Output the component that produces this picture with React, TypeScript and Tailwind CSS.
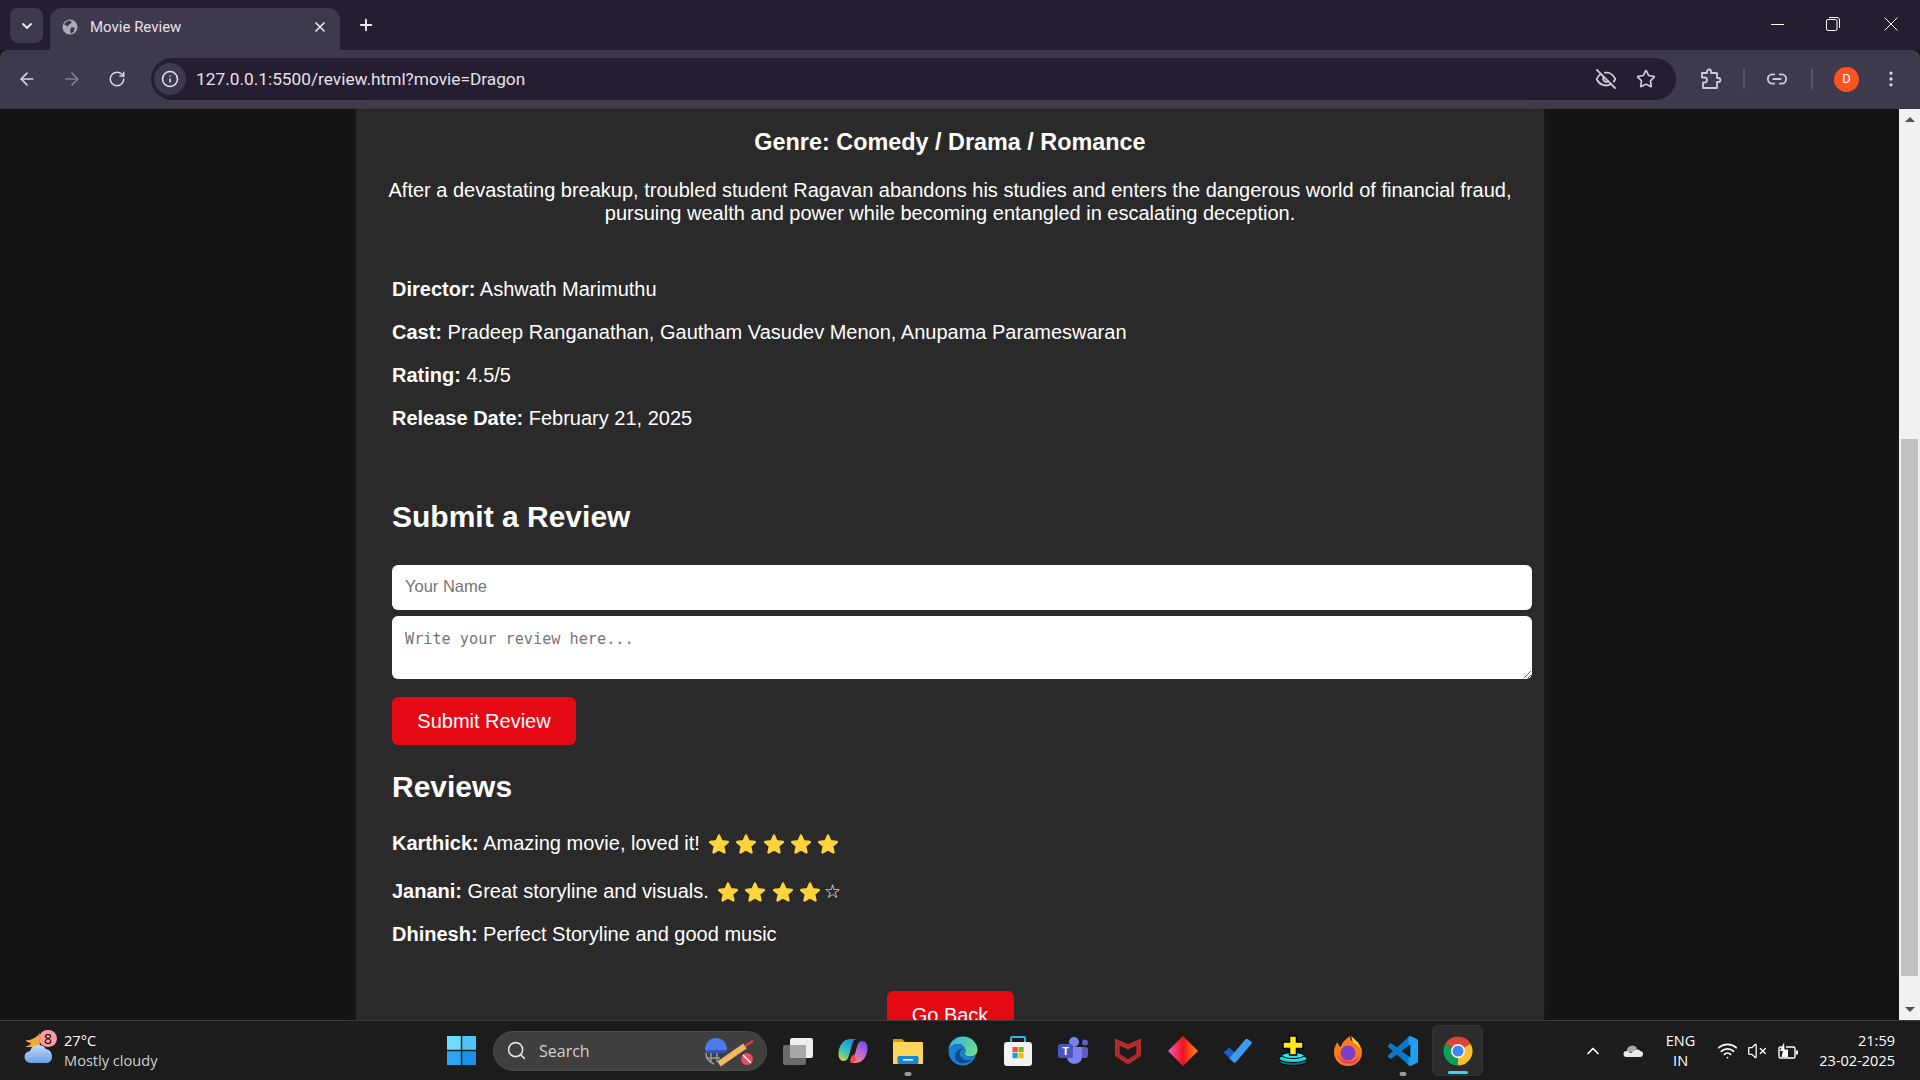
import React from 'react';
import { ArrowLeft, ArrowRight, RotateCw, Info, EyeOff, Star, Link2, EllipsisVertical, ChevronDown, X, Plus, Search, ChevronUp, Wifi, VolumeX } from 'lucide-react';

const YellowStar = () => (
    <svg viewBox="0 0 24 24" className="w-5 h-5 shrink-0">
        <path fill="#FFD43B" stroke="#FFD43B" strokeWidth="3" strokeLinejoin="round" d="M12 2l3 6.800 7.500.8-5.600 5 1.600 7.400L12 18.200 5.500 22l1.600-7.400-5.600-5 7.500-.8z" />
    </svg>
);

const Globe = () => (
    <svg viewBox="0 0 16 16" className="w-[16px] h-[16px] shrink-0">
        <circle cx="8" cy="8" r="7.500" fill="#A9ADB4" />
        <path fill="#3F394D" d="M6 1.500l3.500.5-.5 2.500-2 1-1 2-3-1.500-1-1zM9.500 8l3.500 1-1.500 4-2.500 1.500-1-3z" />
    </svg>
);

const AppIcon = ({ children, active }: { children: React.ReactNode; active?: boolean }) => (
    <div className={active ? "w-[51px] h-[51px] rounded-md bg-[#2c2c2c] border border-[#333] flex items-center justify-center" : "w-[51px] h-[51px] flex items-center justify-center"}>
        {children}
    </div>
);

const Dot = () => <div className="absolute bottom-0 left-1/2 -translate-x-1/2 w-[7px] h-[4px] rounded-full bg-[#9a9a9a]" />;

const App = () => {
    return (
        <div className="h-screen w-full flex flex-col overflow-hidden bg-[#141414] text-white font-['Liberation_Sans',Arial,sans-serif]">
            {/* browser chrome */}
            <div className="h-[50px] shrink-0 bg-[#241e30] flex items-end pl-[10px]">
                <div className="w-[33px] h-[35px] mb-[7px] rounded-lg bg-[#3f394d] flex items-center justify-center">
                    <ChevronDown size={16} strokeWidth={3} className="text-[#e6e3ec]" />
                </div>
                <div className="ml-[7px] w-[290px] h-[42px] rounded-t-xl bg-[#3f394d] flex items-center pl-[12px] pr-[12px] pb-[4px] text-[15px] text-[#e4e1ea] font-['Roboto',sans-serif]">
                    <Globe />
                    <span className="ml-[12px] flex-1">Movie Review</span>
                    <X size={16} strokeWidth={2.5} className="text-[#eeeaf3]" />
                </div>
                <div className="ml-[17px] mb-[10px] h-[30px] flex items-center">
                    <Plus size={18} strokeWidth={2.5} className="text-[#eeeaf3]" />
                </div>
                <div className="ml-auto self-start mt-[17px] pr-[22px] flex items-center">
                    <div className="w-[13px] h-px bg-white" />
                    <svg viewBox="0 0 14 14" className="ml-[42px] w-[14px] h-[14px]" fill="none" stroke="#fff">
                        <rect x="0.500" y="2.500" width="10.500" height="11" rx="1.500" />
                        <path d="M3 .5h8a2.500 2.500 0 0 1 2.500 2.500v8" />
                    </svg>
                    <svg viewBox="0 0 14 14" className="ml-[44px] w-[14px] h-[14px]" fill="none" stroke="#fff">
                        <path d="M.5.5l13 13M13.500.5l-13 13" />
                    </svg>
                </div>
            </div>
            <div className="h-[59px] shrink-0 bg-[#3f394d] rounded-t-lg flex items-center pl-[17px] pr-[14px] border-b border-[#37323f]">
                <ArrowLeft size={20} className="text-[#d8d4de]" />
                <ArrowRight size={20} className="ml-[25px] text-[#837e8d]" />
                <RotateCw size={18} className="ml-[26px] text-[#d8d4de]" />
                <div className="ml-[25px] w-[1525px] h-[42px] rounded-full bg-[#241e30] flex items-center pl-[3px] pr-[20px]">
                    <div className="w-[32px] h-[32px] rounded-full bg-[#3f394d] flex items-center justify-center">
                        <Info size={18} className="text-[#e6e3ec]" />
                    </div>
                    <span className="ml-[10px] mt-[1px] flex-1 text-[17.3px] text-[#e4e1ea] font-['Roboto',sans-serif]">127.0.0.1:5500/review.html?movie=Dragon</span>
                    <EyeOff size={22} className="text-[#cfcbd6]" />
                    <Star size={20} className="ml-[19px] text-[#cfcbd6]" />
                </div>
                <svg viewBox="0 0 22 22" className="ml-[24px] w-[22px] h-[22px]" fill="none" stroke="#cfcbd6" strokeWidth="1.800" strokeLinejoin="round">
                    <path d="M2 5h5V3.500a2 2 0 0 1 4 0V5h6v5h1.500a2 2 0 0 1 0 4H17v6H3v-5.500h1.500a2.500 2.500 0 0 0 0-5H2z" />
                </svg>
                <div className="ml-[21px] w-[2px] h-[20px] bg-[#5a5466]" />
                <Link2 size={22} className="ml-[21px] text-[#cfcbd6]" />
                <div className="ml-[23px] w-[2px] h-[20px] bg-[#5a5466]" />
                <div className="ml-[21px] w-[25px] h-[25px] rounded-full bg-[#fb5420] flex items-center justify-center text-[13px] font-['Roboto',sans-serif]">D</div>
                <EllipsisVertical size={20} className="ml-[22px] text-[#d8d4de]" />
            </div>

            {/* page */}
            <div className="flex-1 min-h-0 flex">
                <div className="flex-1 flex justify-center">
                    <div className="w-[1188px] ml-[1px] h-full overflow-hidden bg-[#2a2a2a] shadow-[0_0_15px_rgba(255,255,255,0.05)]">
                        <h3 className="mt-[19px] text-[23.4px] leading-[28px] font-bold text-center">Genre: Comedy / Drama / Romance</h3>
                        <p className="mt-[23px] text-[20px] leading-[23px] text-center">
                            After a devastating breakup, troubled student Ragavan abandons his studies and enters the dangerous world of financial fraud, pursuing wealth and power while becoming entangled in escalating deception.
                        </p>
                        <div className="ml-[36px] mr-[12px]">
                            <div className="mt-[53px] flex flex-col gap-[20px] text-[20px] leading-[23px]">
                                <p><b>Director:</b> Ashwath Marimuthu</p>
                                <p><b>Cast:</b> Pradeep Ranganathan, Gautham Vasudev Menon, Anupama Parameswaran</p>
                                <p><b>Rating:</b> 4.5/5</p>
                                <p><b>Release Date:</b> February 21, 2025</p>
                            </div>
                            <h2 className="mt-[69px] text-[30px] leading-[35px] font-bold">Submit a Review</h2>
                            <input placeholder="Your Name" className="mt-[31px] block w-full h-[45px] rounded-[6px] bg-white px-[13px] pb-[2px] text-[16.5px] text-black placeholder:text-[#757575] outline-none" />
                            <textarea placeholder="Write your review here..." className="mt-[6px] block w-full h-[63px] rounded-[6px] bg-white px-[13px] pt-[14px] text-[15.2px] leading-[18px] text-black placeholder:text-[#757575] outline-none font-['DejaVu_Sans_Mono',monospace]" />
                            <button className="mt-[18px] block w-[184px] h-[48px] rounded-[6px] bg-[#e50914] text-[20px] pb-[1px]">Submit Review</button>
                            <h2 className="mt-[24px] text-[30px] leading-[35px] font-bold">Reviews</h2>
                            <p className="mt-[28px] flex items-center h-[23px] text-[20px] leading-[23px] whitespace-pre">
                                <b>Karthick:</b> Amazing movie, loved it!
                                <span className="ml-[9px] flex gap-[7.4px]"><YellowStar /><YellowStar /><YellowStar /><YellowStar /><YellowStar /></span>
                            </p>
                            <p className="mt-[25px] flex items-center h-[23px] text-[20px] leading-[23px] whitespace-pre">
                                <b>Janani:</b> Great storyline and visuals.
                                <span className="ml-[9px] flex items-center gap-[7.4px]"><YellowStar /><YellowStar /><YellowStar /><YellowStar /></span>
                                <span className="ml-[4px] text-[19px] font-bold text-white font-['DejaVu_Sans',sans-serif]">☆</span>
                            </p>
                            <p className="mt-[20px] text-[20px] leading-[23px]"><b>Dhinesh:</b> Perfect Storyline and good music</p>
                            <div className="mt-[45px] flex justify-center pr-[24px]">
                                <button className="w-[127px] h-[48px] shrink-0 rounded-[6px] bg-[#e50914] text-[20px]">Go Back</button>
                            </div>
                        </div>
                    </div>
                </div>
                {/* scrollbar */}
                <div className="w-[21px] shrink-0 bg-[#f1f1f1] flex flex-col items-center">
                    <div className="h-[21px] flex items-center"><div className="w-0 h-0 border-x-[5px] border-x-transparent border-b-[5px] border-b-[#505050]" /></div>
                    <div className="mt-[309px] w-[17px] h-[537px] bg-[#c1c1c1]" />
                    <div className="mt-auto h-[21px] flex items-center"><div className="w-0 h-0 border-x-[5px] border-x-transparent border-t-[5px] border-t-[#505050]" /></div>
                </div>
            </div>

            {/* taskbar */}
            <div className="h-[60px] shrink-0 bg-[#1c1c1c] border-t border-[#3a3a3a] flex items-center font-['Open_Sans',sans-serif] text-[14px]">
                <div className="w-[445px] pl-[16px] flex items-center">
                    <div className="relative w-[40px] h-[40px] -mt-[1px]">
                        <svg viewBox="0 0 40 40" className="w-[40px] h-[40px]">
                            <defs>
                                <linearGradient id="cloud" x1="0" x2="0" y1="0" y2="1">
                                    <stop offset="0" stopColor="#C3DAF8" />
                                    <stop offset="1" stopColor="#6C9FE6" />
                                </linearGradient>
                            </defs>
                            <path fill="#F2A93B" d="M24 3c-1 5 0 9 0 14H9c3-1 6-3 6-4-2 0-4-1-6-3 5 1 11-2 15-7z" />
                            <path fill="url(#cloud)" d="M15 33a6 6 0 0 1-1-12 9 9 0 0 1 16-2 7.500 7.500 0 0 1 2 14z" />
                        </svg>
                        <div className="absolute left-[23px] top-0 w-[18px] h-[17px] rounded-full bg-[#ff9aa2] text-black text-[14px] leading-[17px] text-center">8</div>
                    </div>
                    <div className="ml-[8px] -mt-[2px] leading-[20px] text-[14.6px]">
                        <div className="text-white">27°C</div>
                        <div className="text-[#cfcfcf]">Mostly cloudy</div>
                    </div>
                </div>
                <svg viewBox="0 0 20 20" className="w-[29px] h-[29px] ml-[2px]">
                    <rect x="0" y="0" width="9.500" height="9.500" fill="#6FDCFC" />
                    <rect x="10.500" y="0" width="9.500" height="9.500" fill="#4FC4F8" />
                    <rect x="0" y="10.500" width="9.500" height="9.500" fill="#2BA8F5" />
                    <rect x="10.500" y="10.500" width="9.500" height="9.500" fill="#1C8FE8" />
                </svg>
                <div className="ml-[17px] w-[274px] h-[40px] rounded-full bg-[#3f3f3f] border border-[#4a4a4a] flex items-center pl-[12px] pr-[8px]">
                    <Search size={21} strokeWidth={1.8} className="text-[#e0e0e0]" />
                    <span className="ml-[12px] flex-1 text-[16px] text-[#d0d0d0]">Search</span>
                    <svg viewBox="0 0 54 32" className="w-[54px] h-[32px]">
                        <path fill="#4F7BE8" d="M1 14a11 11 0 0 1 22 0l-1 4H3z" />
                        <path fill="#2F55B8" d="M3 15h19v3H3z" />
                        <path fill="none" stroke="#9a9a9a" strokeWidth="1.500" d="M2 18c0 6 3 9 8 11M7 18v10M13 18v9M2 23h14" />
                        <path stroke="#EDB866" strokeWidth="6" d="M15 29l26-18" />
                        <path stroke="#D8404A" strokeWidth="2.500" d="M41 11l8-5" />
                        <circle cx="43" cy="24" r="6" fill="#EE4A62" />
                        <path stroke="#fff" strokeWidth="1.500" d="M39 20l8 8" />
                    </svg>
                </div>
                <div className="ml-[5px] flex items-center gap-[4px]">
                    <AppIcon>
                        <svg viewBox="0 0 30 30" className="w-[30px] h-[30px]">
                            <rect x="0" y="9" width="23" height="20" rx="2" fill="#6b6b6b" />
                            <rect x="7" y="2" width="23" height="20" rx="2" fill="#eeeeee" />
                            <rect x="7" y="9" width="16" height="13" fill="#a8a8a8" />
                        </svg>
                    </AppIcon>
                    <AppIcon>
                        <svg viewBox="0 0 30 26" className="w-[30px] h-[26px]">
                            <defs>
                                <linearGradient id="copL" x1="0.700" x2="0.100" y1="0" y2="1">
                                    <stop offset="0" stopColor="#1F8FE8" />
                                    <stop offset="0.600" stopColor="#38C8B0" />
                                    <stop offset="1" stopColor="#F0D030" />
                                </linearGradient>
                                <linearGradient id="copR" x1="0.800" x2="0.200" y1="0" y2="1">
                                    <stop offset="0" stopColor="#6A50E0" />
                                    <stop offset="0.500" stopColor="#C868D8" />
                                    <stop offset="1" stopColor="#F08860" />
                                </linearGradient>
                            </defs>
                            <path fill="url(#copL)" d="M12 1h7c-2 0-3.500 1-4.500 4l-4 14c-1 3-3 4-5 4-3 0-5-3-5-7C.5 10 4 1 12 1z" />
                            <path fill="url(#copR)" d="M18 25h-7c2 0 3.500-1 4.500-4l4-14c1-3 3-4 5-4 3 0 5 3 5 7 0 6-3.500 15-11.500 15z" />
                            <path fill="#E84850" d="M13 25c-1-2-1-4 0-6l3-3 2 6c-1 2-3 3-5 3z" />
                        </svg>
                    </AppIcon>
                    <div className="relative">
                        <AppIcon>
                            <svg viewBox="0 0 30 26" className="w-[30px] h-[26px]">
                                <path fill="#D89A10" d="M0 2a1 1 0 0 1 1-1h8l3 3h-12z" />
                                <rect x="0" y="4" width="30" height="22" rx="1" fill="#FCD55A" />
                                <rect x="4.500" y="18" width="21" height="8" rx="1.500" fill="#1A86D8" />
                                <rect x="10" y="21" width="10" height="1.500" fill="#fff" />
                            </svg>
                        </AppIcon>
                        <Dot />
                    </div>
                    <AppIcon>
                        <svg viewBox="0 0 30 30" className="w-[30px] h-[30px]">
                            <defs>
                                <linearGradient id="edgeTop" x1="0" x2="1" y1="0.300" y2="0.700">
                                    <stop offset="0" stopColor="#2BB8E8" />
                                    <stop offset="1" stopColor="#6FDC8A" />
                                </linearGradient>
                            </defs>
                            <path fill="url(#edgeTop)" d="M15 .5C23 .5 29.500 6.500 29.500 14c0 4-3 6.500-7 6.500-3 0-6-1-6-3 0-1 1-1.500 1-3C17.500 11 14 8 10 8 5 8 .5 11 .5 15 .5 6.500 7 .5 15 .5z" />
                            <path fill="#1A7FD0" d="M.5 15C.5 11 5 8 10 8c4 0 7.500 3 7.500 6.500 0 1.500-1 2-1 3 0 2 3 3 6 3 2 0 4-.5 5.500-1.500C26 25 21 29.500 15 29.500 6.500 29.500.5 23 .5 15z" />
                            <path fill="#0C4B8E" d="M12 27C7 25 6 20 8 16.500 10 13 13 12 15.500 12.500 12.500 14 11 17 12.500 20.500c1.500 3 6 5 11.500 3-3 3-7 4.500-12 3.500z" />
                        </svg>
                    </AppIcon>
                    <AppIcon>
                        <svg viewBox="0 0 30 32" className="w-[30px] h-[32px]">
                            <path fill="none" stroke="#27B9E9" strokeWidth="2" d="M8 9V3a1 1 0 0 1 1-1h12a1 1 0 0 1 1 1v6" />
                            <rect x="1" y="7" width="28" height="24" rx="3" fill="#F3F3F3" />
                            <rect x="9.500" y="12" width="5.200" height="5.200" fill="#F25022" />
                            <rect x="15.500" y="12" width="5.200" height="5.200" fill="#7FBA00" />
                            <rect x="9.500" y="18" width="5.200" height="5.200" fill="#00A4EF" />
                            <rect x="15.500" y="18" width="5.200" height="5.200" fill="#FFB900" />
                        </svg>
                    </AppIcon>
                    <AppIcon>
                        <svg viewBox="0 0 30 27" className="w-[30px] h-[27px]">
                            <circle cx="27" cy="5.500" r="3" fill="#5B5FC7" />
                            <circle cx="16" cy="5" r="5" fill="#7B83EB" />
                            <rect x="20" y="10" width="10" height="11" rx="3" fill="#5B5FC7" />
                            <path fill="#7B83EB" d="M9 10h15v10a7.500 7 0 0 1-15 0z" />
                            <rect x="0" y="7" width="15" height="14" rx="2" fill="#4B53BC" />
                            <text x="7.500" y="18" fontSize="11" fontWeight="700" fill="#fff" textAnchor="middle" fontFamily="Liberation Sans">T</text>
                        </svg>
                    </AppIcon>
                    <AppIcon>
                        <svg viewBox="0 0 28 30" className="w-[26px] h-[29px]">
                            <path fill="#B22B2B" fillRule="evenodd" d="M0 2l14 6 14-6v19L14 30 0 21zM5 10v8.500l9 6 9-6V10l-9 4z" />
                        </svg>
                    </AppIcon>
                    <AppIcon>
                        <svg viewBox="0 0 30 30" className="w-[30px] h-[30px]">
                            <defs>
                                <linearGradient id="kite" x1="0" x2="1" y1="0" y2="0">
                                    <stop offset="0" stopColor="#F063C0" />
                                    <stop offset="0.500" stopColor="#F01020" />
                                    <stop offset="1" stopColor="#F89010" />
                                </linearGradient>
                            </defs>
                            <path fill="url(#kite)" d="M15 0l15 15-15 15L0 15z" />
                        </svg>
                    </AppIcon>
                    <AppIcon>
                        <svg viewBox="0 0 30 26" className="w-[30px] h-[25px]">
                            <path fill="#1B5FBF" d="M0 15l6-5 7 7-5 6z" />
                            <path fill="#3C9BEE" d="M6 21L23 1a2 2 0 0 1 2 0l4 3a2 2 0 0 1 0 2L13 25a2 2 0 0 1-3 0z" />
                        </svg>
                    </AppIcon>
                    <AppIcon>
                        <svg viewBox="0 0 30 31" className="w-[30px] h-[31px]">
                            <ellipse cx="15" cy="26.500" rx="14" ry="4" fill="#0B6C78" stroke="#000" />
                            <ellipse cx="15" cy="23.500" rx="14" ry="4" fill="#24D6E8" stroke="#000" />
                            <ellipse cx="15" cy="20.500" rx="11" ry="3" fill="#24E8F0" stroke="#000" />
                            <path fill="#FFE81A" stroke="#000" strokeWidth="1.500" d="M11.500 1h7v6h6.500v6.500h-6.500V20h-7v-6.500H5V7h6.500z" />
                        </svg>
                    </AppIcon>
                    <AppIcon>
                        <svg viewBox="0 0 30 32" className="w-[30px] h-[32px]">
                            <path fill="#FF7A1A" d="M15 31C7 31 1 25 1 17c0-4 1-7 4-10 0 3 1 4 3 5 1-5 5-8 9-11 0 5 3 6 6 9 1-2 1-3 1-4 3 4 5 7 5 11 0 8-6 14-14 14z" />
                            <path fill="#FFC83D" d="M18 1c4 3 9 8 10 14-2-4-5-6-8-7z" />
                            <circle cx="15" cy="18" r="7.500" fill="#7B3FC8" />
                            <path fill="#E8397A" d="M4 20c2 6 7 9 12 9 5 0 9-3 10-8-3 4-7 6-11 5-4 0-8-3-11-6z" />
                        </svg>
                    </AppIcon>
                    <div className="relative">
                        <AppIcon>
                            <svg viewBox="0 0 24 24" className="w-[30px] h-[30px]">
                                <defs>
                                    <clipPath id="vsRight"><rect x="16.500" y="0" width="8" height="24" /></clipPath>
                                </defs>
                                <path fill="#0A78C8" d="M23.150 2.587L18.210.21a1.494 1.494 0 0 0-1.705.29l-9.460 8.630-4.120-3.128a.999.999 0 0 0-1.276.057L.327 7.261A1 1 0 0 0 .326 8.740L3.899 12 .326 15.260a1 1 0 0 0 .001 1.479L1.650 17.940a.999.999 0 0 0 1.276.057l4.120-3.128 9.460 8.630a1.492 1.492 0 0 0 1.704.29l4.942-2.377A1.500 1.500 0 0 0 24 20.060V3.939a1.500 1.500 0 0 0-.85-1.352zm-5.146 14.861L10.826 12l7.178-5.448v10.896z" />
                                <path clipPath="url(#vsRight)" fill="#22A0F0" d="M23.150 2.587L18.210.21a1.494 1.494 0 0 0-1.705.29l-9.460 8.630-4.120-3.128a.999.999 0 0 0-1.276.057L.327 7.261A1 1 0 0 0 .326 8.740L3.899 12 .326 15.260a1 1 0 0 0 .001 1.479L1.650 17.940a.999.999 0 0 0 1.276.057l4.120-3.128 9.460 8.630a1.492 1.492 0 0 0 1.704.29l4.942-2.377A1.500 1.500 0 0 0 24 20.060V3.939a1.500 1.500 0 0 0-.85-1.352zm-5.146 14.861L10.826 12l7.178-5.448v10.896z" />
                            </svg>
                        </AppIcon>
                        <Dot />
                    </div>
                    <div className="relative">
                        <AppIcon active>
                            <svg viewBox="0 0 30 30" className="w-[30px] h-[30px]">
                                <path fill="#DB4437" d="M15 15L2.440 7.750A14.500 14.500 0 0 1 27.560 7.750Z" />
                                <path fill="#FBC02D" d="M15 15L27.560 7.750A14.500 14.500 0 0 1 15 29.500Z" />
                                <path fill="#0F9D58" d="M15 15L15 29.500A14.500 14.500 0 0 1 2.440 7.750Z" />
                                <circle cx="15" cy="15" r="7" fill="#fff" />
                                <circle cx="15" cy="15" r="5.500" fill="#3F86F0" />
                            </svg>
                        </AppIcon>
                        <div className="absolute bottom-[2px] left-1/2 -translate-x-1/2 w-[20px] h-[3px] rounded-full bg-[#3cd6f5]" />
                    </div>
                </div>
                <div className="flex-1" />
                <div className="flex items-center text-white pr-[25px]">
                    <ChevronUp size={20} strokeWidth={2} />
                    <svg viewBox="0 0 20 13" className="ml-[20px] w-[20px] h-[13px]">
                        <path fill="#a8a8a8" d="M4 8a5.500 5.500 0 0 1 10-4l-3 4z" />
                        <path fill="#e8e8e8" d="M3.500 13a3 3 0 0 1 0-6L8 9l4-3c3-1 5 0 5 1a3 3 0 0 1 0 6z" />
                    </svg>
                    <div className="ml-[23px] text-center text-[14.5px] leading-[20px]">
                        <div>ENG</div>
                        <div>IN</div>
                    </div>
                    <Wifi size={21} className="ml-[22px]" />
                    <VolumeX size={20} strokeWidth={1.5} className="ml-[9px]" />
                    <svg viewBox="0 0 22 18" className="ml-[10px] w-[22px] h-[18px]" fill="none" stroke="#fff" strokeWidth="1.400">
                        <path d="M5 5H3.500A1.500 1.500 0 0 0 2 6.500v8A1.500 1.500 0 0 0 3.500 16h13a1.500 1.500 0 0 0 1.500-1.500v-8A1.500 1.500 0 0 0 16.500 5H9" />
                        <path fill="#fff" stroke="none" d="M19 8.500h1.500a.5.5 0 0 1 .5.5v3a.5.5 0 0 1-.5.5H19z" />
                        <path fill="#fff" stroke="none" d="M7 .5L3 9h3l-1.500 6H11V7.500H7.500z" />
                    </svg>
                    <div className="ml-[20px] text-right text-[14.5px] leading-[20px]">
                        <div>21:59</div>
                        <div>23-02-2025</div>
                    </div>
                </div>
            </div>
        </div>
    );
};

export default App;
